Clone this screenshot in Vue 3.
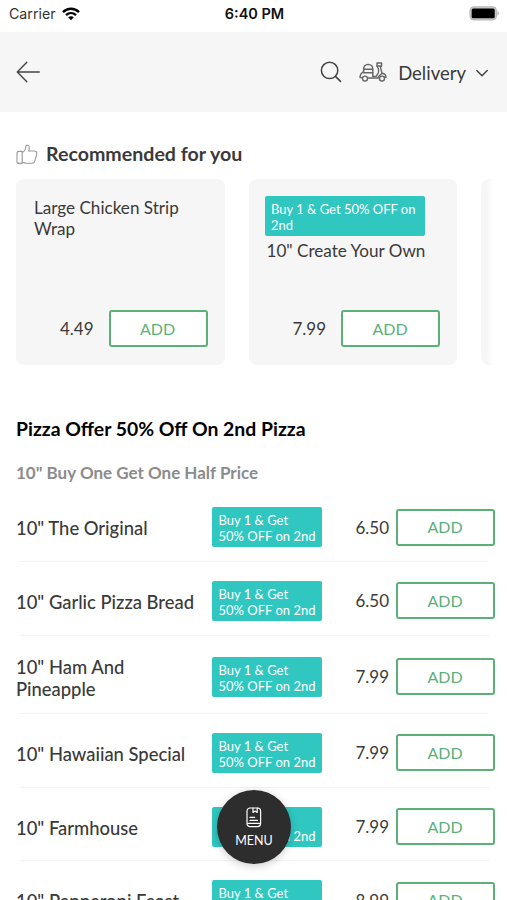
<template>
  <div class="screen">
    <header class="status-bar">
      <div class="carrier">
        <span>Carrier</span>
        <svg width="18" height="14" viewBox="0 0 18 14" fill="none" stroke="#000" stroke-width="2.4">
          <path d="M1 5.1C5.6 .6 12.4 .6 17 5.1" />
          <path d="M4 8.2c2.9-2.8 7.1-2.8 10 0" />
          <path d="M6.2 10.3C7.8 8.8 10.2 8.8 11.8 10.3L9 13.2z" fill="#000" stroke="none" />
        </svg>
      </div>
      <span class="clock">6:40 PM</span>
      <svg class="battery" width="31" height="15" viewBox="0 0 31 15">
        <rect x="1" y=".8" width="26.4" height="13.2" rx="3.6" fill="#c9c9c9" stroke="#b5b5b5" stroke-width="1" />
        <rect x="2.7" y="2.5" width="23" height="9.8" rx="1.5" fill="#000" />
        <path d="M28.5 5v4.8c1.8-.8 1.8-4 0-4.8z" fill="#aaa" />
      </svg>
    </header>

    <nav class="top-bar">
      <button class="icon-btn back">
        <svg width="26" height="22" viewBox="0 0 26 22" fill="none" stroke="#444" stroke-width="1.4" stroke-linecap="round" stroke-linejoin="round">
          <path d="M24.3 11H2.3M11.8 1.2L2.3 11l9.5 9.8" />
        </svg>
      </button>
      <div class="actions">
        <button class="icon-btn">
          <svg width="22" height="22" viewBox="0 0 22 22" fill="none" stroke="#444" stroke-width="1.5" stroke-linecap="round">
            <circle cx="9.6" cy="9.4" r="8.2" />
            <path d="M15.5 15.4l5 5" />
          </svg>
        </button>
        <button class="delivery">
          <svg class="scooter" width="28" height="20" viewBox="0 0 28 20" fill="none" stroke="#666" stroke-width="1.4" stroke-linecap="round" stroke-linejoin="round">
            <path d="M4.6 9.6V7.4C4.6 4.6 6.2 2.6 9.2 2.4c3 .2 4.6 2.2 4.6 5v7.2" />
            <path d="M4.6 7.2h9.2M4.6 10.8h9.2M4.6 9.6C2.2 10.8 1 13 1 15.6h2.4" />
            <path d="M8.6 16h11.6M13.8 14.4h3.4l2-3.4c.6-1.4 .6-2.8.2-4.2L18 4V1h4.6v3.2h-1.4l1.8 7c2.6 .4 4 1.8 4 4h-1.6" />
            <path d="M18 4h3.2M23 11.2l-3.6 3.6" />
            <circle cx="6" cy="16.6" r="2.5" />
            <circle cx="23" cy="16.6" r="2.5" />
          </svg>
          <span>Delivery</span>
          <svg width="14" height="9" viewBox="0 0 14 9" fill="none" stroke="#444" stroke-width="1.5" stroke-linecap="round" stroke-linejoin="round">
            <path d="M1.8 2.5L7 7.7l5.2-5.2" />
          </svg>
        </button>
      </div>
    </nav>

    <section class="recommended">
      <h2>
        <svg width="22" height="21" viewBox="0 0 22 21" fill="none" stroke="#999" stroke-width="1.1" stroke-linejoin="round">
          <path d="M6.2 7.4H3Q1 7.4 1 9.4v8q0 2 2 2h3.2z" />
          <path d="M6.2 8.6C9 7 10 5.2 9.8 2.4 9.8 .8 12.8 .6 13.2 2.8c.3 1.5 0 2.9-.6 4.2h5.6c2 0 3 1.3 2.5 3.2l-1.9 7c-.4 1.5-1.3 2.1-2.7 2.1H9.4L6.2 18" />
        </svg>
        <span>Recommended for you</span>
      </h2>
      <div class="cards">
        <article v-for="card in cards" :key="card.name" class="card">
          <span v-if="card.offer" class="badge">{{ card.offer }}</span>
          <p class="card-name" :class="{ 'with-badge': card.offer }">{{ card.name }}</p>
          <div class="card-footer">
            <span class="price">{{ card.price }}</span>
            <button class="add-btn">ADD</button>
          </div>
        </article>
        <article class="card peek"></article>
      </div>
    </section>

    <section class="menu">
      <h2>Pizza Offer 50% Off On 2nd Pizza</h2>
      <h3>10" Buy One Get One Half Price</h3>
      <ul>
        <li v-for="item in items" :key="item.name">
          <div class="row">
            <span class="item-name">{{ item.name }}</span>
            <span class="badge">Buy 1 &amp; Get<br>50% OFF on 2nd</span>
            <span class="price">{{ item.price }}</span>
            <button class="add-btn">ADD</button>
          </div>
        </li>
      </ul>
    </section>

    <button class="menu-fab">
      <svg width="16" height="21" viewBox="0 0 16 21" fill="none" stroke="#fff" stroke-width="1.2" stroke-linecap="round" stroke-linejoin="round">
        <rect x="1" y="1" width="13.6" height="18.6" rx="3" />
        <path d="M7 1.2v4.2l2.1-1.3 2.1 1.3V1.2M4 10.4h4.6M4 13.4h7.5M1.8 16.4h12" />
      </svg>
      <span>MENU</span>
    </button>
  </div>
</template>

<script setup>
const cards = [
  { name: 'Large Chicken Strip Wrap', price: '4.49', offer: '' },
  { name: '10" Create Your Own', price: '7.99', offer: 'Buy 1 & Get 50% OFF on 2nd' }
]

const items = [
  { name: '10" The Original', price: '6.50' },
  { name: '10" Garlic Pizza Bread', price: '6.50' },
  { name: '10" Ham And Pineapple', price: '7.99' },
  { name: '10" Hawaiian Special', price: '7.99' },
  { name: '10" Farmhouse', price: '7.99' },
  { name: '10" Pepperoni Feast', price: '8.99' }
]
</script>

<style>
body {
  margin: 0;
  background: #fff;
}
</style>

<style scoped>
.screen {
  position: relative;
  height: 900px;
  overflow: hidden;
  background: #fff;
  color: #3a3a3a;
  font-family: Lato, sans-serif;
}

button {
  margin: 0;
  padding: 0;
  border: none;
  background: none;
  color: inherit;
  font-family: inherit;
}

svg {
  display: block;
  flex: none;
}

h2,
h3,
p,
ul {
  margin: 0;
  padding: 0;
}

/* Status bar */
.status-bar {
  display: grid;
  grid-template-columns: 1fr auto 1fr;
  align-items: center;
  box-sizing: border-box;
  height: 32px;
  padding: 0 7px 5px 9px;
  font-family: Inter, sans-serif;
  font-size: 14.5px;
}

.carrier {
  display: flex;
  align-items: center;
  gap: 6px;
  color: #333;
  font-size: 14.2px;
}

.clock {
  color: #111;
  font-weight: 600;
}

.battery {
  justify-self: end;
}

/* Navigation */
.top-bar {
  display: flex;
  justify-content: space-between;
  align-items: center;
  box-sizing: border-box;
  height: 80px;
  padding: 0 18px 0 15px;
  background: #f6f6f6;
}

.actions,
.delivery {
  display: flex;
  align-items: center;
}

.actions {
  gap: 17px;
}

.delivery {
  font-size: 18.5px;
}

.delivery span {
  margin: 1px 9px 0 11px;
}

/* Recommended */
.recommended {
  height: 275px;
  padding: 30px 14px 0 16px;
}

.recommended h2 {
  display: flex;
  align-items: center;
  gap: 8px;
  height: 24px;
  margin-bottom: 13px;
  font-size: 19.6px;
  font-weight: 700;
}

.recommended h2 span {
  padding-bottom: 1px;
}

.cards {
  display: flex;
  gap: 24px;
  overflow: hidden;
}

.card {
  display: flex;
  flex: none;
  flex-direction: column;
  align-items: flex-start;
  box-sizing: border-box;
  width: 208.5px;
  height: 186px;
  padding: 17px 17px 18px 16px;
  border-radius: 8px;
  background: #f6f6f6;
}

.card.peek {
  background: linear-gradient(to right, #f6f6f6 6px, #fff 13px);
}

.card-name {
  padding: 2px 2px 0;
  font-size: 17.1px;
  line-height: 20.5px;
}

.card-name.with-badge {
  padding-top: 5px;
}

.card-footer {
  display: flex;
  align-self: stretch;
  justify-content: flex-end;
  align-items: center;
  gap: 15px;
  margin-top: auto;
}

.badge {
  box-sizing: border-box;
  width: 160px;
  height: 40px;
  padding: 5px 0 3px 6.5px;
  border-radius: 2px;
  background: #30c7c1;
  color: #fff;
  font-size: 13px;
  line-height: 16px;
}

.price {
  font-size: 17px;
}

.add-btn {
  box-sizing: border-box;
  width: 99px;
  height: 37px;
  padding: 0 1px 1px 0;
  border: 2px solid #5bb078;
  border-radius: 3px;
  background: #fff;
  color: #5bb078;
  font-size: 16px;
}

/* Menu list */
.menu {
  padding-left: 16px;
}

.menu h2 {
  color: #000;
  font-size: 19.4px;
  font-weight: 700;
  line-height: 24px;
}

.menu h3 {
  margin-top: 21px;
  color: #8c8c8c;
  font-size: 17px;
  font-weight: 700;
  line-height: 22px;
}

.menu ul {
  margin-top: 4px;
  list-style: none;
}

.row {
  display: grid;
  grid-template-columns: 182px 110px 1fr 99px;
  align-items: center;
  column-gap: 0;
  padding: 19px 12px 13.9px 0;
}

li::after {
  content: '';
  display: block;
  height: 1px;
  margin: 0 18px 0 4px;
  background: #f2f2f2;
}

.row .badge {
  width: 110px;
  margin-left: 14px;
}

.row .item-name {
  margin: 1px 0 -1px;
  font-size: 18.4px;
  font-weight: 500;
  line-height: 22px;
}

.row .price {
  padding-right: 7px;
  text-align: right;
}

/* Floating button */
.menu-fab {
  position: absolute;
  top: 790px;
  left: 217px;
  display: flex;
  flex-direction: column;
  align-items: center;
  gap: 5px;
  box-sizing: border-box;
  width: 74px;
  height: 74px;
  padding-top: 17px;
  border-radius: 50%;
  background: #2d2d2d;
  box-shadow: 0 2px 8px rgba(0, 0, 0, 0.2);
  color: #fff;
  font-size: 12.5px;
}
</style>
